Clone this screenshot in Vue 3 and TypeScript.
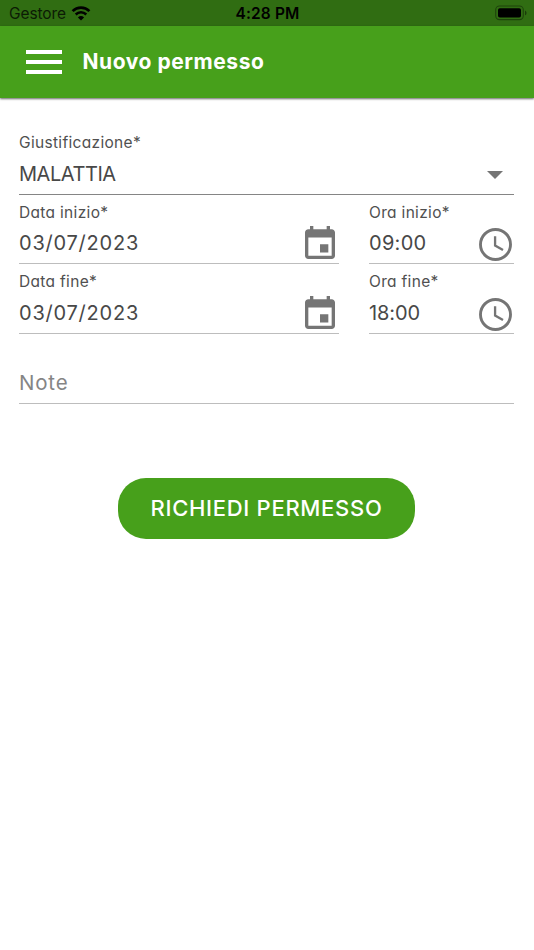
<script setup lang="ts">
import { ref } from 'vue'

interface Slot {
  dateLabel: string
  date: string
  timeLabel: string
  time: string
  timeClass: string
  key: string
}

const reason = ref('MALATTIA')
const slots = ref<Slot[]>([
  { key: 'start', dateLabel: 'Data inizio*', date: '03/07/2023', timeLabel: 'Ora inizio*', time: '09:00', timeClass: 't-nine' },
  { key: 'end', dateLabel: 'Data fine*', date: '03/07/2023', timeLabel: 'Ora fine*', time: '18:00', timeClass: 't-eighteen' },
])
</script>

<template>
  <div class="screen">
    <div class="status">
      <div class="carrier">
        <span class="carrier-name">Gestore</span>
        <svg class="wifi" viewBox="0 0 20 15">
          <path d="M1.6 5.1a12 12 0 0 1 16.8 0" fill="none" stroke="#000" stroke-width="2.7" />
          <path d="M4.7 8.5a7.6 7.6 0 0 1 10.6 0" fill="none" stroke="#000" stroke-width="2.5" />
          <path d="M10 14.6 6.9 11.5a4.5 4.5 0 0 1 6.2 0z" />
        </svg>
      </div>
      <span class="clock">4:28 PM</span>
      <svg class="battery" viewBox="0 0 32 16">
        <rect x="0.7" y="1" width="27.6" height="13.6" rx="3.8" fill="none" stroke="#000" stroke-opacity=".38" stroke-width="1.1" />
        <rect x="3" y="3.2" width="23" height="9.3" rx="1.8" />
        <path d="M30 5.4c2 .9 2 4 0 4.9z" fill-opacity=".45" />
      </svg>
    </div>

    <header class="toolbar">
      <button class="menu" aria-label="Menu">
        <span class="bar"></span>
        <span class="bar"></span>
        <span class="bar"></span>
      </button>
      <h1 class="title">Nuovo permesso</h1>
    </header>

    <main class="form">
      <div class="field field-select">
        <div class="label">Giustificazione*</div>
        <div class="value v-reason">{{ reason }}</div>
        <svg class="arrow" viewBox="0 0 16 8"><path d="M0 0h16l-8 8z" fill="#757575" /></svg>
      </div>

      <div v-for="s in slots" :key="s.key" class="row">
        <div class="field">
          <div class="label">{{ s.dateLabel }}</div>
          <div class="value v-date">{{ s.date }}</div>
          <svg class="calendar" viewBox="3 1 18 20" preserveAspectRatio="none">
            <path fill="#757575" d="M17 12h-5v5h5v-5zM16 1v2H8V1H6v2H5c-1.110 0-1.990.9-1.990 2L3 19c0 1.100.89 2 2 2h14c1.100 0 2-.9 2-2V5c0-1.100-.9-2-2-2h-1V1h-2zm3 18H5V8h14v11z" />
          </svg>
        </div>
        <div class="field">
          <div class="label">{{ s.timeLabel }}</div>
          <div class="value" :class="s.timeClass">{{ s.time }}</div>
          <svg class="time-icon" viewBox="2 2 20 20" fill="none" stroke="#757575">
            <circle cx="12" cy="12" r="9.1" stroke-width="1.75" />
            <path d="M11.750 7v5.600l4.800 2.800" stroke-width="1.400" />
          </svg>
        </div>
      </div>

      <div class="field">
        <div class="label"></div>
        <div class="value v-note">Note</div>
      </div>

      <button class="submit">RICHIEDI PERMESSO</button>
    </main>
  </div>
</template>

<style>
body {
  background: #fff;
}
</style>

<style scoped>
.screen {
  min-height: 950px;
  background: #fff;
  font-family: Inter, "Open Sans", sans-serif;
  font-feature-settings: "cv11";
  color: #484848;
  overflow: hidden;
}

.status {
  display: grid;
  grid-template-columns: 1fr auto 1fr;
  align-items: center;
  height: 26px;
  box-sizing: border-box;
  padding: 0 8px 0 9px;
  background: #306d12;
  color: #000;
  font-feature-settings: normal;
}

.carrier {
  display: flex;
  align-items: center;
  gap: 5px;
}

.carrier-name {
  font-size: 15.5px;
  line-height: 26px;
  padding-top: 1px;
  letter-spacing: -0.1px;
  color: #0c1b05;
}

.wifi {
  width: 20px;
  height: 15px;
}

.clock {
  font-size: 15.5px;
  font-weight: 600;
  line-height: 26px;
  padding-top: 1px;
  letter-spacing: 0.15px;
}

.battery {
  justify-self: end;
  width: 32px;
  height: 16px;
  margin: -1px -1px 0 0;
}

.toolbar {
  display: flex;
  align-items: center;
  height: 72px;
  box-sizing: border-box;
  padding-left: 26px;
  background: #47a01b;
  box-shadow: 0 1px 2px rgba(0, 0, 0, 0.6);
}

.menu {
  display: flex;
  flex-direction: column;
  gap: 6px;
  width: 36px;
  margin: 0 20.5px 0 0;
  padding: 0;
  border: 0;
  background: none;
}

.bar {
  height: 4px;
  background: #fff;
}

.title {
  margin: 0;
  font-size: 21px;
  font-weight: 750;
  line-height: 30px;
  letter-spacing: 0.55px;
  color: #fff;
}

.form {
  display: flex;
  flex-direction: column;
  padding: 27px 20px 0 19px;
}

.field {
  display: grid;
  grid-template-columns: 1fr auto;
  grid-template-rows: 33.7px 1fr;
  height: 69.7px;
  box-sizing: border-box;
  border-bottom: 1px solid #bdbdbd;
}

.field-select {
  border-bottom-color: #858585;
}

.row {
  display: grid;
  grid-template-columns: 320px 145px;
  justify-content: space-between;
}

.label {
  grid-column: 1 / 3;
  padding-top: 1px;
  font-size: 15.5px;
  line-height: 33px;
  letter-spacing: 0.32px;
  white-space: nowrap;
  color: #505050;
}

.value {
  font-size: 20px;
  line-height: 31px;
  white-space: nowrap;
}

.v-reason {
  letter-spacing: -0.45px;
}

.v-date {
  letter-spacing: 0.78px;
}

.t-nine {
  letter-spacing: 0.3px;
}

.t-eighteen {
  letter-spacing: -0.1px;
}

.v-note {
  font-size: 20.5px;
  line-height: 29px;
  letter-spacing: 0.8px;
  color: #858585;
}

.arrow {
  width: 16px;
  height: 8px;
  margin: 12.3px 11px 0 0;
}

.calendar {
  width: 30px;
  height: 33px;
  margin: -2.5px 4px 0 0;
}

.time-icon {
  width: 33px;
  height: 33px;
  margin: -0.5px 2.5px 0 0;
}

.submit {
  align-self: center;
  width: 297px;
  height: 61px;
  margin-top: 74px;
  padding: 0;
  border: 0;
  border-radius: 28px;
  background: #47a01b;
  color: #fff;
  font: 450 22px/59px Inter, "Open Sans", sans-serif;
  letter-spacing: 0.7px;
}
</style>
